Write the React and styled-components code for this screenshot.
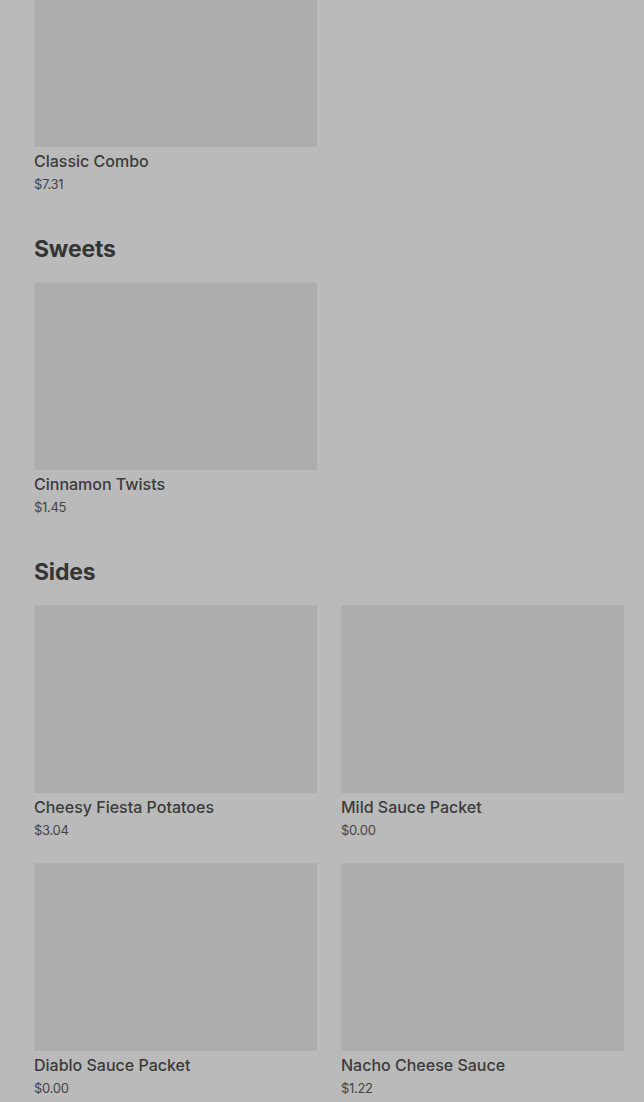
import styled, { createGlobalStyle } from "styled-components";

const GlobalStyle = createGlobalStyle`
  html, body {
    margin: 0;
    padding: 0;
    background: #bababa;
    font-family: Inter, "Noto Sans", sans-serif;
    overflow: hidden;
  }
`;

const Page = styled.main`
  padding: 0 20px 0 34px;
  margin-top: -41px;
  display: flex;
  flex-direction: column;
  gap: 39px;
`;

const Section = styled.section`
  display: flex;
  flex-direction: column;
`;

const Heading = styled.h2`
  margin: 0 0 17px;
  font-size: 23px;
  line-height: 32px;
  font-weight: 700;
  color: #353535;
  letter-spacing: -0.2px;
`;

const Grid = styled.ul`
  list-style: none;
  margin: 0;
  padding: 0;
  display: grid;
  grid-template-columns: repeat(2, 283px);
  column-gap: 24px;
  row-gap: 23px;
`;

const Card = styled.li`
  display: flex;
  flex-direction: column;
`;

const Thumb = styled.div`
  height: 188px;
  background: #adadad;
  box-shadow: inset 1px 1px 0 rgba(255, 255, 255, 0.05);
`;

const Title = styled.h3`
  margin: 4px 0 0;
  font-size: 16px;
  line-height: 20px;
  font-weight: 500;
  color: #3b3b3b;
`;

const Price = styled.p`
  margin: 3px 0 0;
  font-size: 13px;
  line-height: 20px;
  color: #444;
  letter-spacing: -0.3px;
`;

const sections = [
  { name: null, items: [["Classic Combo", "$7.31"]] },
  { name: "Sweets", items: [["Cinnamon Twists", "$1.45"]] },
  {
    name: "Sides",
    items: [
      ["Cheesy Fiesta Potatoes", "$3.04"],
      ["Mild Sauce Packet", "$0.00"],
      ["Diablo Sauce Packet", "$0.00"],
      ["Nacho Cheese Sauce", "$1.22"],
    ],
  },
];

const App = () => (
  <>
    <GlobalStyle />
    <Page>
      {sections.map((s, i) => (
        <Section key={i}>
          {s.name && <Heading>{s.name}</Heading>}
          <Grid>
            {s.items.map(([title, price]) => (
              <Card key={title}>
                <Thumb />
                <Title>{title}</Title>
                <Price>{price}</Price>
              </Card>
            ))}
          </Grid>
        </Section>
      ))}
    </Page>
  </>
);

export default App;
